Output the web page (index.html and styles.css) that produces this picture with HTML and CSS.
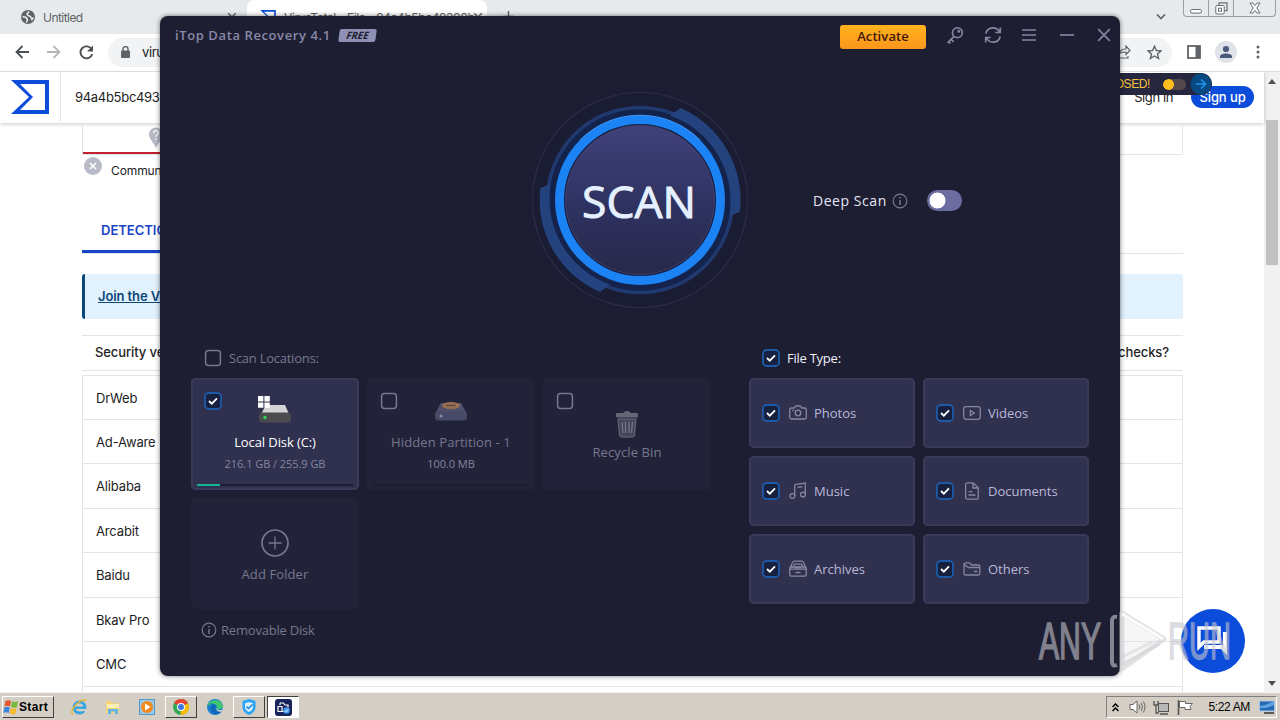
FILE: index.html
```html
<!DOCTYPE html>
<html lang="en">
<head>
  <meta charset="UTF-8" />
  <meta name="viewport" content="width=device-width, initial-scale=1.0"/>
  <title>iTop Data Recovery</title>
  <link rel="stylesheet" href="styles.css">
</head>
<body>

  <!-- shared icons -->
  <svg class="defs" width="0" height="0">
    <symbol id="box-on" viewBox="0 0 18 18">
      <rect x="1" y="1" width="16" height="16" rx="3.5" fill="#17213f" stroke="#1c5aa8" stroke-width="1.8"/>
      <path d="M5 9l2.8 2.7L13 6.4" fill="none" stroke="#fff" stroke-width="1.8"/>
    </symbol>
    <symbol id="box-off" viewBox="0 0 18 18">
      <rect x="1.6" y="1.6" width="14.8" height="14.8" rx="3" fill="none" stroke="#77778f" stroke-width="1.5"/>
    </symbol>
    <symbol id="info" viewBox="0 0 16 16">
      <circle cx="8" cy="8" r="6.8" fill="none" stroke="currentColor" stroke-width="1.2"/>
      <path d="M8 7v5M8 4v1.6" stroke="currentColor" stroke-width="1.5"/>
    </symbol>
    <symbol id="sigma" viewBox="0 0 38 34">
      <path d="M0 0h38v34H0l18-17z" fill="currentColor"/>
      <path d="M9 4h25v26H9l13-13z" fill="#fff"/>
    </symbol>
  </svg>

  <div class="desktop">
    <div class="browser">
      <div class="tabstrip">
        <div class="tab">
          <svg width="14" height="14" viewBox="0 0 14 14"><circle cx="7" cy="7" r="7" fill="#5f6368"/><path d="M1.500 6.500l3.500 1 1.500 2-1 3M8 1.500L6 4l1 1.500 2.500 1 1.500 3 1.500-2" fill="none" stroke="#e7eaed" stroke-width="1.500"/></svg>
          <span class="tab-title">Untitled</span>
          <svg class="tab-x" width="8" height="8" viewBox="0 0 8 8"><path d="M0 0l8 8M8 0L0 8" stroke="#5f6368" stroke-width="1.4"/></svg>
        </div>
        <div class="tab active">
          <svg class="tab-logo" width="16" height="14"><use href="#sigma"/></svg>
          <span class="tab-title">VirusTotal - File - 94a4b5bc49300b</span>
          <svg class="tab-x" width="8" height="8" viewBox="0 0 8 8"><path d="M0 0l8 8M8 0L0 8" stroke="#5f6368" stroke-width="1.4"/></svg>
        </div>
        <svg class="plus" width="11" height="11" viewBox="0 0 11 11"><path d="M5.5 0v11M0 5.5h11" stroke="#5f6368" stroke-width="1.5"/></svg>
        <svg class="chevron" width="10" height="6" viewBox="0 0 10 6"><path d="M1 0.5l4 4 4-4" fill="none" stroke="#5f6368" stroke-width="1.6"/></svg>
        <div class="win-buttons">
          <span><svg width="12" height="14" viewBox="0 0 12 14"><rect x="0.7" y="8.5" width="10.6" height="3.6" rx="1" fill="#fff" stroke="#6a6e73"/></svg></span>
          <span><svg width="13" height="13" viewBox="0 0 13 13"><path d="M4 3V.8h8v7.8H9.6" fill="none" stroke="#6a6e73" stroke-width="1.2"/><rect x=".8" y="3.5" width="8.4" height="8.5" rx="1" fill="#fff" stroke="#6a6e73"/><rect x="3.5" y="6.2" width="3" height="3" fill="none" stroke="#6a6e73"/></svg></span>
          <span><svg width="12" height="12" viewBox="0 0 12 12"><path d="M1 1h3l2 2.6L8 1h3L7.8 6 11 11H8L6 8.4 4 11H1l3.2-5z" fill="#fff" stroke="#6a6e73"/></svg></span>
        </div>
      </div>

      <div class="toolbar">
        <svg width="14" height="14" viewBox="0 0 14 14"><path d="M14 7H1.5M7.5 1l-6 6 6 6" fill="none" stroke="#4b4f54" stroke-width="1.8"/></svg>
        <svg width="14" height="14" viewBox="0 0 14 14"><path d="M0 7h12.5M6.5 1l6 6-6 6" fill="none" stroke="#b5b8bb" stroke-width="1.8"/></svg>
        <svg width="15" height="15" viewBox="0 0 15 15"><path d="M12.8 4.5A6 6 0 1 0 13.3 9" fill="none" stroke="#4b4f54" stroke-width="1.9"/><path d="M14 .5v6H8z" fill="#4b4f54"/></svg>
        <div class="address">
          <svg width="9" height="12" viewBox="0 0 9 12"><rect y="4.5" width="9" height="7.5" rx="1" fill="#5f6368"/><path d="M2 5V3a2.5 2.5 0 0 1 5 0v2" fill="none" stroke="#5f6368" stroke-width="1.4"/></svg>
          <span>virustotal.com</span>
          <svg class="share" width="15" height="14" viewBox="0 0 15 14"><path d="M1 6v7h11v-2M3 9c1-4 4-5 7-5V1l4 4.5-4 4V7C7 7 5 7 3 9z" fill="none" stroke="#5f6368" stroke-width="1.2"/></svg>
          <svg width="15" height="15" viewBox="0 0 15 15"><path d="M7.5 1.2l1.9 4.3 4.7.4-3.6 3 1.1 4.6-4.1-2.5-4.1 2.5 1.1-4.6-3.6-3 4.7-.4z" fill="none" stroke="#5f6368" stroke-width="1.4"/></svg>
        </div>
        <svg width="14" height="14" viewBox="0 0 14 14"><rect x="1" y="1" width="12" height="12" fill="none" stroke="#5f6368" stroke-width="1.8"/><path d="M8.5 1H13v12H8.5z" fill="#5f6368"/></svg>
        <svg class="profile" width="22" height="22" viewBox="0 0 22 22"><circle cx="11" cy="11" r="11" fill="#dfe2e8"/><circle cx="11" cy="8" r="3.1" fill="#4a5a7a"/><path d="M5 17v-1.5c0-4 12-4 12 0V17z" fill="#4a5a7a"/></svg>
        <svg class="dots" width="4" height="14" viewBox="0 0 4 14"><circle cx="2" cy="2" r="1.5" fill="#5f6368"/><circle cx="2" cy="7" r="1.5" fill="#5f6368"/><circle cx="2" cy="12" r="1.5" fill="#5f6368"/></svg>
      </div>

      <div class="viewport">
        <div class="page">
          <div class="page-header">
            <div class="logo"><svg width="38" height="34"><use href="#sigma"/></svg></div>
            <span class="hash">94a4b5bc49300b8c</span>
            <span class="sign-in">Sign in</span>
            <span class="sign-up">Sign up</span>
            <div class="exposed">
              <span>EXPOSED!</span>
              <i class="mini-toggle"></i>
              <svg width="22" height="22" viewBox="0 0 22 22"><circle cx="11" cy="11" r="10.5" fill="#074a83"/><path d="M6 11h9M11 6.5l4.5 4.5-4.5 4.5" fill="none" stroke="#1c93e8" stroke-width="1.7"/></svg>
            </div>
          </div>

          <div class="report">
            <div class="score">
              <svg width="14" height="22" viewBox="0 0 14 22"><path d="M7 22C5 17 0 13 0 8.5a7 7 0 0 1 14 0C14 13 9 17 7 22z" fill="#b6b9c6"/><path d="M4.8 7c0-3 4.6-3 4.6-.2C9.400 8.500 7 8.400 7 11M7 12.500v1.500" fill="none" stroke="#fff" stroke-width="1.3"/></svg>
            </div>
            <div class="community">
              <svg width="18" height="18" viewBox="0 0 18 18"><circle cx="9" cy="9" r="9" fill="#b9bcc8"/><path d="M6 6l6 6M12 6l-6 6" stroke="#fff" stroke-width="1.6"/></svg>
              <span>Community</span>
            </div>
            <div class="tabs"><span>DETECTION</span></div>
            <div class="join"><a>Join the VT Community</a></div>
            <div class="vendors-head"><span>Security vendors' analysis</span><span>checks?</span></div>
            <div class="vendors">
              <div>DrWeb</div>
              <div>Ad-Aware</div>
              <div>Alibaba</div>
              <div>Arcabit</div>
              <div>Baidu</div>
              <div>Bkav Pro</div>
              <div>CMC</div>
              <div></div>
            </div>
          </div>

          <div class="chat">
            <svg width="32" height="31" viewBox="0 0 32 31"><path d="M3 3h20v14H8l-5 5z" fill="none" stroke="#fff" stroke-width="3.4"/><path d="M27 7h4v23l-6-6H8v-4h19z" fill="#fff"/></svg>
          </div>
        </div>
        <div class="scrollbar">
          <svg width="8" height="5" viewBox="0 0 8 5"><path d="M0 5l4-5 4 5z" fill="#505050"/></svg>
          <i class="thumb"></i>
          <svg width="8" height="5" viewBox="0 0 8 5"><path d="M0 0l4 5 4-5z" fill="#505050"/></svg>
        </div>
      </div>
    </div>

    <div class="taskbar">
      <div class="start">
        <svg width="16" height="16" viewBox="0 0 16 16"><path d="M2.500 2q3-1.500 5.500 0L7 7.500q-3-1.500-5.500 0z" fill="#e8562a"/><path d="M9 2.300q3 1.500 6 0L13.800 8q-3 1.500-5.800 0z" fill="#7bb83a"/><path d="M1.300 8.500q3-1.300 5.500 0l-1 5.500q-3-1.500-5.500 0z" fill="#3c86d8"/><path d="M7.800 9q3 1.500 5.800 0l-1 5.500q-3 1.500-5.900 0z" fill="#f5bb29"/></svg>
        <b>Start</b>
      </div>
      <div class="task">
        <svg width="18" height="18" viewBox="0 0 18 18"><circle cx="9.500" cy="9.500" r="5.400" fill="none" stroke="#36a4e0" stroke-width="3"/><path d="M5 9.700h9.500" stroke="#36a4e0" stroke-width="2.400"/><path d="M10 11h7v2.200h-7z" fill="#d4d0c8"/><path d="M3 16.500C-2 13 10 0 16.500 2.500" fill="none" stroke="#e6b93a" stroke-width="1.500"/></svg>
      </div>
      <div class="task">
        <svg width="18" height="18" viewBox="0 0 18 18"><path d="M2 3h5l1 2h7v10H2z" fill="#f2d477"/><path d="M3 6h12v4H3z" fill="#fbeeb2"/><path d="M4 16v-5h10v5h-3v-2.500H7V16z" fill="#64b4e6"/></svg>
      </div>
      <div class="task">
        <svg width="18" height="18" viewBox="0 0 18 18"><rect x="1.500" y="1.500" width="15" height="15" fill="#9cc8e8" stroke="#5299cc"/><circle cx="9" cy="9" r="6" fill="#f28a1c"/><path d="M7 5.500l5.500 3.500L7 12.500z" fill="#fff"/></svg>
      </div>
      <div class="task raised">
        <svg width="18" height="18" viewBox="0 0 18 18"><circle cx="9" cy="9" r="8" fill="#34a853"/><path d="M9 9L2.100 5A8 8 0 0 1 16 5.200z" fill="#ea4335"/><path d="M9 9l7-3.800A8 8 0 0 1 8.600 17z" fill="#fbbc04"/><circle cx="9" cy="9" r="4" fill="#fff"/><circle cx="9" cy="9" r="3" fill="#3b78e0"/></svg>
      </div>
      <div class="task">
        <svg width="18" height="18" viewBox="0 0 18 18"><circle cx="9" cy="9" r="8" fill="#1682cf"/><path d="M1.200 8C2 2 14-1 17 8c0 4-6 4-6.500 2 2-3-3-6-9.300-2z" fill="#42c66f"/><path d="M2 7c3-3 8-2 8 2-2 1-1 5 6 4-5 6-12 3-11-3 0-2 1-3 3-4-3-.5-5 .5-6 1z" fill="#1167b8"/><path d="M10.500 10c1 3 5 2.500 6.500 1l-1 2.500c-4 1-6-1-5.500-3.500z" fill="#d4d0c8"/></svg>
      </div>
      <div class="task raised">
        <svg width="18" height="18" viewBox="0 0 18 18"><path d="M9 1l6.500 2v6c0 4-3 6.500-6.500 8-3.500-1.500-6.500-4-6.500-8V3z" fill="#2aa4f4"/><path d="M9 4l4 1.200V9c0 2.500-2 4-4 5-2-1-4-2.500-4-5V5.200z" fill="#d8effd"/><path d="M6.500 8.500l2 2 4-4" fill="none" stroke="#1683df" stroke-width="1.500"/></svg>
      </div>
      <div class="task pressed">
        <svg width="17" height="17" viewBox="0 0 17 17"><rect width="17" height="17" rx="3" fill="#17235b"/><path d="M5 4h3.500l1.500 2h3v2.500M5 4v2M3 7.500h4v5h-4zM7 12.500h2" fill="none" stroke="#fff" stroke-width="1.200"/><circle cx="11.500" cy="11.500" r="3.200" fill="#3f9cf0"/><path d="M10 11.500l1.200 1.200 2-2.200" fill="none" stroke="#fff"/></svg>
      </div>
      <div class="tray">
        <svg width="7" height="9" viewBox="0 0 7 9"><path d="M.5 4l3-3 3 3M.5 8l3-3 3 3" fill="none" stroke="#000" stroke-width="1.500"/></svg>
        <svg class="volume" width="17" height="14" viewBox="0 0 17 14"><path d="M1 4.500h3L8 1v12L4 9.500H1z" fill="#fff" stroke="#666"/><path d="M10 4.500q1.500 2.500 0 5M12.200 3q2.500 4 0 8M14.300 1.500q3.300 5.500 0 11" fill="none" stroke="#666"/></svg>
        <svg width="17" height="15" viewBox="0 0 17 15"><rect x="5.500" y="3.500" width="10" height="8" fill="#b8b8b8" stroke="#555"/><path d="M7 14h8M1 1v4h4V1M3 5v8h3" fill="none" stroke="#555" stroke-width="1.300"/></svg>
        <svg width="17" height="15" viewBox="0 0 17 15"><path d="M1.500 0v15" stroke="#555" stroke-width="1.600"/><path d="M2.500 1.500h6v2h7l-2.500 3 1 3H8v-2H2.500z" fill="#fff" stroke="#666"/></svg>
        <span class="clock">5:22 AM</span>
        <svg width="16" height="14" viewBox="0 0 16 14"><rect x=".5" y="1" width="15" height="10" fill="#2467b5" stroke="#a9c8e6"/><path d="M1 6q7-1 14-5v4q-8 4-14 3z" fill="#5fa2df"/><path d="M5 13h10" stroke="#333" stroke-width="1.500"/></svg>
      </div>
    </div>

    <div class="app">
      <div class="titlebar">
        <h1>iTop Data Recovery 4.1</h1>
        <span class="free"><em>FREE</em></span>
        <button class="activate">Activate</button>
        <svg class="i-key" width="18" height="19" viewBox="0 0 18 19"><circle cx="11.400" cy="6.700" r="4.900"/><path d="M8 10.300L1.500 16.800M5 13.300l2.600 2.600M2.500 15.500l2 2"/><circle cx="12.800" cy="5.300" r=".7"/></svg>
        <svg class="i-sync" width="18" height="18" viewBox="0 0 18 18"><path d="M1.800 7.500A7.300 7.300 0 0 1 15.500 6M16.200 10.500A7.300 7.300 0 0 1 2.500 12M16.300 1.500V6.500h-5M1.700 16.500v-5h5"/></svg>
        <svg class="i-menu" width="14" height="14" viewBox="0 0 14 14"><path d="M0 2h14M0 7h14M0 12h14"/></svg>
        <svg class="i-min" width="14" height="14" viewBox="0 0 14 14"><path d="M0 7h14"/></svg>
        <svg class="i-close" width="14" height="14" viewBox="0 0 14 14"><path d="M1.200 1.200l11.600 11.600M12.800 1.200L1.200 12.800"/></svg>
      </div>

      <div class="hero">
        <svg class="scan" width="240" height="240" viewBox="0 0 240 240">
          <defs>
            <linearGradient id="core" x1="0" y1="0" x2="0" y2="1">
              <stop offset="0" stop-color="#40417a"/>
              <stop offset=".55" stop-color="#2e3260"/>
              <stop offset="1" stop-color="#27284a"/>
            </linearGradient>
            <radialGradient id="glow">
              <stop offset=".7" stop-color="#142551"/>
              <stop offset=".9" stop-color="#1b1d34"/>
              <stop offset="1" stop-color="#1e1e32"/>
            </radialGradient>
          </defs>
          <circle cx="120" cy="120" r="120" fill="url(#glow)"/>
          <circle cx="120" cy="120" r="107.500" fill="#1a1c33" stroke="#292a3f" stroke-width="1.500"/>
          <circle cx="120" cy="120" r="92.500" fill="#14234c" stroke="#203a70" stroke-width="3.500"/>
          <!-- outer arcs -->
          <path d="M150 35.500L160.500 28A100.500 100.500 0 0 1 219.800 132L209.500 136A91 91 0 0 0 150 35.500z" fill="#24427e"/>
          <path d="M90 204.500L80 212A100.500 100.500 0 0 1 20.300 108L30.500 104A91 91 0 0 0 90 204.500z" fill="#24427e"/>
          <circle cx="120" cy="120" r="87" fill="#15234a"/>
          <circle cx="120" cy="120" r="80.500" fill="#141d42" stroke="#1c83f5" stroke-width="9"/>
          <path d="M60 60A85 85 0 0 1 180 60" fill="none" stroke="#4a9af5" stroke-width=".8"/>
          <circle cx="120" cy="120" r="74.500" fill="url(#core)" stroke="#4a4671" stroke-width=".8"/>
          <text x="62" y="137.500" textLength="114" lengthAdjust="spacingAndGlyphs">SCAN</text>
        </svg>
        <div class="deep">
          <span>Deep Scan</span>
          <svg width="16" height="16"><use href="#info"/></svg>
          <i class="toggle"></i>
        </div>
      </div>

      <div class="panels">
        <section class="locations">
          <div class="panel-title"><svg width="18" height="18"><use href="#box-off"/></svg><span>Scan Locations:</span></div>
          <div class="disks">
            <div class="disk selected">
              <svg class="check" width="18" height="18"><use href="#box-on"/></svg>
              <svg class="drive" width="34" height="28" viewBox="0 0 34 28">
                <path d="M8 9h19l4 9H3z" fill="#d4d4d4"/>
                <rect x="1" y="16.500" width="32" height="10" rx="3.500" fill="#4c4c4e"/>
                <circle cx="7" cy="21.500" r="1.700" fill="#2fd35c"/>
                <path d="M0 0h5.400v5.400H0zM6.400 0h5.400v5.400H6.400zM0 6.400h5.400v5.400H0zM6.400 6.400h5.400v5.400H6.400z" fill="#fff"/>
              </svg>
              <div class="name">Local Disk (C:)</div>
              <div class="size">216.1 GB / 255.9 GB</div>
              <div class="usage"><i style="width: 15%"></i></div>
            </div>
            <div class="disk">
              <svg class="check" width="18" height="18"><use href="#box-off"/></svg>
              <svg class="drive" width="34" height="28" viewBox="0 0 34 28">
                <path d="M7 9h20l5 9H2z" fill="#50516d"/>
                <rect x="1" y="17" width="32" height="9.500" rx="3.500" fill="#484b67"/>
                <ellipse cx="17" cy="11.500" rx="9" ry="3.500" fill="#9a704f"/>
                <path d="M12 11.500h10" stroke="#5e4a49" stroke-width="1.500"/>
                <circle cx="7" cy="22" r="1.500" fill="#8a8ca9"/>
              </svg>
              <div class="name">Hidden Partition - 1</div>
              <div class="size">100.0 MB</div>
              <div class="usage"></div>
            </div>
            <div class="disk bin">
              <svg class="check" width="18" height="18"><use href="#box-off"/></svg>
              <svg class="drive" width="24" height="28" viewBox="0 0 24 28">
                <path d="M8 3q4-4 8 0z" fill="#696a79"/>
                <rect x="1" y="3" width="22" height="4.500" rx="1" fill="#666776"/>
                <path d="M3 9h18l-1.500 16q-.3 2-2 2h-11q-1.700 0-2-2z" fill="#45465a" stroke="#6c6d7c"/>
                <path d="M7 12l1 11M10.500 12v11M14 12v11M17.500 12l-1 11" stroke="#77788b" stroke-width="1.200"/>
              </svg>
              <div class="name">Recycle Bin</div>
            </div>
            <div class="disk add">
              <svg width="30" height="30" viewBox="0 0 30 30"><path d="M15 8.500v13M8.500 15h13" stroke="#77778f" stroke-width="1.300"/><circle cx="15" cy="15" r="13" fill="none" stroke="#77778f" stroke-width="1.700"/></svg>
              <div class="name">Add Folder</div>
            </div>
          </div>
          <div class="removable"><svg width="16" height="16"><use href="#info"/></svg><span>Removable Disk</span></div>
        </section>

        <section class="types">
          <div class="panel-title"><svg width="18" height="18"><use href="#box-on"/></svg><span>File Type:</span></div>
          <div class="type-grid">
            <div class="type">
              <svg width="18" height="18"><use href="#box-on"/></svg>
              <svg class="icon" width="18" height="18" viewBox="0 0 18 18"><path d="M2.500 4h2.800l1.400-2h4.600l1.400 2h2.800q1.800 0 1.800 1.800v7.400q0 1.800-1.800 1.800h-13Q.7 15 .7 13.200V5.800Q.7 4 2.500 4z"/><circle cx="9" cy="9" r="2.800"/><path d="M3.300 6.500h1.500"/></svg>
              <span>Photos</span>
            </div>
            <div class="type">
              <svg width="18" height="18"><use href="#box-on"/></svg>
              <svg class="icon" width="18" height="18" viewBox="0 0 18 18"><rect x=".7" y="2.700" width="16.600" height="12.600" rx="2.500"/><path d="M7.300 6.500v5L11.300 9z"/></svg>
              <span>Videos</span>
            </div>
            <div class="type">
              <svg width="18" height="18"><use href="#box-on"/></svg>
              <svg class="icon" width="18" height="18" viewBox="0 0 18 18"><path d="M5.700 14V3.500Q5.700 2.500 7 2.300L16.300 1v11.500M8.500 5.500l5-.8"/><circle cx="3.400" cy="14" r="2.400"/><circle cx="14" cy="12.600" r="2.400"/></svg>
              <span>Music</span>
            </div>
            <div class="type">
              <svg width="18" height="18"><use href="#box-on"/></svg>
              <svg class="icon" width="18" height="18" viewBox="0 0 18 18"><path d="M4.500.9H10l5.300 5v9.300q0 1.900-1.900 1.900H4.500q-1.900 0-1.900-1.900V2.800Q2.600.9 4.500.9zM10 1v5h5M5.500 9.700h4M5.500 13h7"/></svg>
              <span>Documents</span>
            </div>
            <div class="type">
              <svg width="18" height="18"><use href="#box-on"/></svg>
              <svg class="icon" width="18" height="18" viewBox="0 0 18 18"><path d="M1 8l2.500-5.500Q4 1.200 5.400 1.200h7.200q1.400 0 1.900 1.300L17 8M4.200 6.500l1.300-2.300h7l1.300 2.300M6 7.500h6M.7 9.200h16.600v4.700q0 2.200-2.200 2.200H2.900Q.7 16.100.7 13.900zM.7 9.200Q.7 7 2.500 7h13q1.800 0 1.800 2.200M6.500 12.500h5"/></svg>
              <span>Archives</span>
            </div>
            <div class="type">
              <svg width="18" height="18"><use href="#box-on"/></svg>
              <svg class="icon" width="18" height="18" viewBox="0 0 18 18"><path d="M1 13.500V4.300Q1 2.800 2.500 2.800h4.200L8.500 5h6.700q1.600 0 1.600 1.500v7q0 1.500-1.600 1.500H2.600Q1 15 1 13.500zM5 7.500h11.500M11 11.500h3.500M1.500 4.500L5 7.500"/></svg>
              <span>Others</span>
            </div>
          </div>
        </section>
      </div>
    </div>

    <svg class="watermark" width="200" height="70" viewBox="0 0 200 70">
      <text x="4" y="54" textLength="62" lengthAdjust="spacingAndGlyphs">ANY</text>
      <text x="133" y="54" textLength="63" lengthAdjust="spacingAndGlyphs">RUN</text>
      <path d="M82 12q-5-1-5 4v41q0 5 5 3" fill="none" stroke="#c9c9d0" stroke-opacity=".6" stroke-width="4"/>
      <path d="M87 8l42 26-42 30z" fill="#dedee2" fill-opacity=".28" stroke="#d4d4d8" stroke-opacity=".65" stroke-width="5" stroke-linejoin="round"/>
      <path d="M87 52l30-15M87 59l38-20" stroke="#cfcfd4" stroke-opacity=".5" stroke-width="3"/>
      <path d="M87 9l41 25" stroke="#fff" stroke-opacity=".85" stroke-width="3"/>
    </svg>
  </div>

</body>
</html>
```
FILE: styles.css
```css
* { box-sizing: border-box; margin: 0; padding: 0; }
body {
  width: 1280px;
  height: 720px;
  overflow: hidden;
  font-family: "Open Sans", "Noto Sans", sans-serif;
  font-size: 13px;
}
svg { display: block; flex: none; }
span, b, .name, .size { white-space: nowrap; }
.defs { position: absolute; }
.desktop {
  position: relative;
  display: flex;
  flex-direction: column;
  height: 720px;
}

/* Browser */
.browser {
  height: 692px;
  display: flex;
  flex-direction: column;
  background: #fff;
  font-family: Inter, "Liberation Sans", sans-serif;
}
.tabstrip {
  height: 34px;
  flex: none;
  display: flex;
  background: #e7eaed;
}
.tab {
  display: flex;
  align-items: center;
  width: 247px;
  padding: 0 11px 0 21px;
  font-size: 12px;
  color: #5f6368;
}
.tab.active {
  width: 240px;
  padding-left: 13px;
  background: #fff;
  border-radius: 8px 8px 0 0;
}
.tab-title {
  flex: 1;
  margin-left: 8px;
  letter-spacing: -0.65px;
}
.tab.active .tab-title { letter-spacing: -0.4px; }
.tab:first-child .tab-title { letter-spacing: -0.55px; }
.tab-logo { color: #0b4dda; }
.plus { margin: 11px 0 0 16px; }
.chevron { margin: 14px 17px 0 auto; }
.win-buttons {
  display: flex;
  width: 93px;
  height: 17px;
  margin-right: 4px;
  border: 1px solid #9a9da1;
  border-top: 0;
  border-radius: 0 0 4px 4px;
}
.win-buttons span {
  width: 25px;
  display: flex;
  align-items: center;
  justify-content: center;
  border-right: 1px solid #9a9da1;
}
.win-buttons span:last-child { flex: 1; border: 0; }
.toolbar {
  height: 38px;
  flex: none;
  display: flex;
  align-items: center;
  padding: 0 20px 1px 15px;
  gap: 18px;
  border-bottom: 1px solid #dadce0;
}
.address {
  flex: 1;
  display: flex;
  align-items: center;
  height: 29px;
  margin: 0 -3px 0 -4px;
  padding: 0 10px 0 13px;
  border-radius: 15px;
  background: #f1f3f4;
  color: #202124;
}
.address span { margin-left: 12px; letter-spacing: -0.4px; }
.share { margin: 0 16px 0 auto; }
.profile { margin-left: -4px; }
.dots { margin-left: 1px; }

.viewport {
  flex: 1;
  display: flex;
  overflow: hidden;
}
.page {
  position: relative;
  flex: 1;
  color: #1d1d23;
}
.page-header {
  position: relative;
  display: flex;
  align-items: center;
  height: 51px;
  padding: 0 10px 1px 0;
  box-shadow: 0 1px 4px rgba(0,0,0,0.22);
}
.logo {
  width: 61px;
  height: 50px;
  padding: 8px 0 0 11px;
  border-right: 1px solid #e2e4ec;
  color: #0b4dda;
}
.hash { margin-left: 14px; letter-spacing: -0.3px; }
.sign-in { margin-left: auto; letter-spacing: -0.4px; }
.sign-up {
  margin-left: 18px;
  width: 63px;
  height: 22px;
  line-height: 22px;
  text-align: center;
  border-radius: 11px;
  background: #0b4dda;
  color: #fff;
  font-weight: 500;
  letter-spacing: -0.1px;
}
/* floating pill over the header */
.exposed {
  position: absolute;
  top: 1px;
  right: 52px;
  display: flex;
  align-items: center;
  height: 22px;
  padding-left: 20px;
  border-radius: 0 11px 11px 0;
  background: #26273e;
  color: #f3c13c;
  font-family: "Liberation Sans", sans-serif;
  font-size: 12px;
  letter-spacing: -0.4px;
}
.mini-toggle {
  width: 23px;
  height: 11px;
  margin: 0 4px 0 13px;
  border-radius: 6px;
  background: radial-gradient(circle at 5.5px 5.5px, #ffbf1f 5px, #54484a 5.8px);
}

.report {
  width: 1101px;
  margin-left: 82px;
}
.score {
  height: 32px;
  padding: 3px 0 0 66px;
  border: 1px solid #e3e4ea;
  border-top: 0;
  position: relative;
  background: linear-gradient(#c0202f, #c0202f) left 29px / 500px 2px no-repeat;
}
.community {
  display: flex;
  gap: 9px;
  height: 47px;
  padding: 2px 0 0 2px;
  font-size: 12px;
}
.community span { padding-top: 6px; letter-spacing: -0.1px; }
.tabs {
  height: 52px;
  border-bottom: 1px solid #e3e4ea;
  color: #1845c8;
  font-weight: 600;
  display: flex;
}
.tabs span {
  width: 116px;
  padding: 20px 0 0 19px;
  border-bottom: 3px solid #1845c8;
}
.join {
  height: 45px;
  margin: 20px 0 16px;
  padding-left: 13px;
  line-height: 45px;
  border-left: 3px solid #0b4778;
  border-radius: 3px;
  background: #e1f1fd;
  color: #0b4778;
  font-weight: 600;
  letter-spacing: -0.1px;
  text-decoration: underline;
}
.vendors-head {
  display: flex;
  justify-content: space-between;
  height: 36px;
  padding: 0 14px 0 13px;
  line-height: 33px;
  border-top: 1px solid #e3e4ea;
  border-bottom: 1px solid #e3e4ea;
  font-weight: 500;
  letter-spacing: -0.1px;
}
.vendors {
  margin-top: 4px;
  border: 1px solid #e3e4ea;
}
.vendors div {
  height: 44.5px;
  padding-left: 13px;
  line-height: 44px;
  border-bottom: 1px solid #e3e4ea;
  letter-spacing: -0.15px;
}
.vendors div:first-child { height: 43.7px; }
/* support chat bubble */
.chat {
  position: absolute;
  right: 19px;
  top: 537px;
  width: 64px;
  height: 64px;
  padding: 16px 0 0 15px;
  border-radius: 50%;
  background: #0b4dda;
}
.scrollbar {
  width: 16px;
  display: flex;
  flex-direction: column;
  align-items: center;
  padding: 7px 0 6px;
  background: #f1f1f1;
}
.thumb {
  width: 12px;
  height: 145px;
  margin: 36px 0 auto;
  background: #c1c1c1;
}

/* Taskbar */
.taskbar {
  display: flex;
  align-items: center;
  height: 28px;
  padding: 1px 3px 0 2px;
  border-top: 1px solid #f4f2ee;
  background: #d4cec5;
  font-family: "Liberation Sans", sans-serif;
  font-size: 12px;
}
.start {
  display: flex;
  align-items: center;
  gap: 0;
  width: 52px;
  height: 22px;
  margin-right: 9px;
  border: 1px solid;
  border-color: #fff #404040 #404040 #fff;
}
.start b { letter-spacing: 0.35px; }
.task {
  display: flex;
  align-items: center;
  justify-content: center;
  width: 32px;
  height: 22px;
  margin-right: 2px;
}
.raised {
  border: 1px solid;
  border-color: #fff #404040 #404040 #fff;
}
.pressed {
  border: 1px solid;
  border-color: #404040 #fff #fff #404040;
  background: #fff;
}
.tray {
  display: flex;
  align-items: center;
  width: 171px;
  height: 22px;
  margin-left: auto;
  padding: 0 1px 0 5px;
  border: 1px solid;
  border-color: #808080 #fff #fff #808080;
}
.tray svg + svg { margin-left: 7px; }
.tray .volume { margin-left: 10px; }
.clock { margin: 0 9px 0 auto; letter-spacing: -0.35px; }

/* Data Recovery window */
.app {
  position: absolute;
  left: 160px;
  top: 16px;
  width: 960px;
  height: 660px;
  border-radius: 8px;
  background: #1e1e32;
  box-shadow: 0 0 5px rgba(0,0,0,0.55);
  color: #77778f;
}
.titlebar {
  display: flex;
  align-items: center;
  height: 38px;
  padding: 0 9px 0 15px;
}
.titlebar h1 {
  font-size: 13px;
  font-weight: 600;
  letter-spacing: 0.6px;
  color: #8889a9;
}
.titlebar svg {
  fill: none;
  stroke: #8485a2;
  stroke-width: 1.7;
}
.free {
  width: 37px;
  height: 13px;
  margin-left: 8px;
  border-radius: 2px;
  background: #8e90b4;
  transform: skewX(-8deg);
  color: #1e1e32;
  font-size: 10px;
  font-weight: 700;
  line-height: 13px;
  text-align: center;
}
.activate {
  width: 86px;
  height: 24px;
  margin: 4px 20px 0 auto;
  padding-bottom: 2px;
  border: 0;
  border-radius: 3px;
  background: linear-gradient(#ffb21c, #fb961d);
  color: #44160c;
  font: 600 13px "Open Sans", sans-serif;
  letter-spacing: 0.1px;
}
.i-sync { margin-left: 20px; }
.i-menu { margin-left: 20px; }
.i-min { margin-left: 24px; }
.i-close { margin-left: 23px; }

.hero {
  display: grid;
  grid-template-columns: 360px 240px 1fr;
  align-items: center;
  height: 292px;
}
.scan { grid-column: 2; }
.scan text {
  font-size: 43px;
  font-weight: 400;
  fill: #e5f0ff;
  stroke: #e5f0ff;
  stroke-width: 0.9;
}
.deep {
  display: flex;
  align-items: center;
  padding-left: 53px;
  color: #e4e5f5;
  font-size: 14px;
}
.deep span { letter-spacing: 0.55px; }
.deep svg { margin: 2px 19px 0 5px; color: #77778f; }
.toggle {
  width: 35px;
  height: 21px;
  border-radius: 11px;
  background: radial-gradient(circle at 10.5px 10.5px, #fff 7.6px, #6b6da0 8.3px);
}

.panels {
  display: flex;
  justify-content: space-between;
  padding: 2px 31px 0;
}
.panel-title {
  display: flex;
  align-items: center;
  gap: 7px;
  height: 20px;
  margin-bottom: 10px;
  padding-left: 13px;
  letter-spacing: -0.25px;
}
.types .panel-title { color: #f0f0fa; }
.disks {
  display: grid;
  grid-template-columns: repeat(3, 168px);
  grid-auto-rows: 112px;
  gap: 8px;
}
.disk {
  position: relative;
  display: flex;
  flex-direction: column;
  align-items: center;
  padding: 16px 8px 0;
  border-radius: 5px;
  background: #222239;
  letter-spacing: 0.1px;
}
.check {
  position: absolute;
  left: 13px;
  top: 14px;
}
.disk.selected {
  padding-top: 18px;
  background: #30304f;
  box-shadow: inset 0 0 0 2px #3a3a59;
}
.disk.selected .drive { margin-bottom: 9px; }
.disk.selected .name { color: #fff; letter-spacing: -0.1px; }
.disk .size { color: #85869f; letter-spacing: -0.05px; }
.drive { margin-bottom: 11px; }
.name { line-height: 18px; }
.size {
  margin-top: 5px;
  font-size: 11px;
  line-height: 16px;
}
.usage {
  width: 156px;
  height: 2px;
  margin-top: 12px;
  background: #1c1c30;
}
.usage i {
  display: block;
  height: 2px;
  background: #16b491;
}
.bin { padding-top: 32px; }
.bin .drive { margin-bottom: 5px; }
.add { height: 111px; padding-top: 30px; }
.add .name { margin-top: 7px; }
.removable {
  display: flex;
  align-items: center;
  gap: 4px;
  margin-top: 11px;
  padding-left: 10px;
  line-height: 18px;
  letter-spacing: -0.2px;
}
.type-grid {
  display: grid;
  grid-template-columns: repeat(2, 166px);
  grid-auto-rows: 70px;
  gap: 8px;
}
.type {
  display: flex;
  align-items: center;
  padding-left: 13px;
  border-radius: 5px;
  background: #30304f;
  box-shadow: inset 0 0 0 2px #3a3a59;
  color: #b8b9d9;
  letter-spacing: 0;
}
.icon {
  margin: 0 7px 0 9px;
  fill: none;
  stroke: #85869f;
  stroke-width: 1.3;
}

/* translucent watermark above everything */
.watermark {
  position: absolute;
  left: 1035px;
  top: 605px;
}
.watermark text {
  font-family: "Liberation Sans Narrow", "Liberation Sans", sans-serif;
  font-size: 52px;
  fill: #c4c4cc;
  stroke: #c4c4cc;
  stroke-width: 1.6;
  opacity: 0.6;
}
```
